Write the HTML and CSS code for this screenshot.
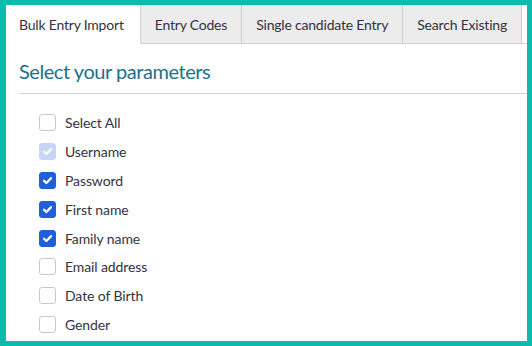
FILE: index.html
```html
<!DOCTYPE html>
<html lang="en">
<head>
<meta charset="utf-8">
<title>Bulk Entry Import</title>
<link rel="stylesheet" href="styles.css">
</head>
<body>
<div class="frame">
  <div class="tabs">
    <div class="tab active">Bulk Entry Import</div>
    <div class="tab">Entry Codes</div>
    <div class="tab">Single candidate Entry</div>
    <div class="tab">Search Existing</div>
  </div>
  <div class="panel">
    <h2 class="title">Select your parameters</h2>
    <ul class="params">
      <li class="param"><span class="box"></span><span class="label">Select All</span></li>
      <li class="param"><span class="box checked disabled"><svg viewBox="0 0 16 16"><path d="M4.3 8.2l2.5 2.5 4.9-5.2"/></svg></span><span class="label">Username</span></li>
      <li class="param"><span class="box checked"><svg viewBox="0 0 16 16"><path d="M4.3 8.2l2.5 2.5 4.9-5.2"/></svg></span><span class="label">Password</span></li>
      <li class="param"><span class="box checked"><svg viewBox="0 0 16 16"><path d="M4.3 8.2l2.5 2.5 4.9-5.2"/></svg></span><span class="label">First name</span></li>
      <li class="param"><span class="box checked"><svg viewBox="0 0 16 16"><path d="M4.3 8.2l2.5 2.5 4.9-5.2"/></svg></span><span class="label">Family name</span></li>
      <li class="param"><span class="box"></span><span class="label">Email address</span></li>
      <li class="param"><span class="box"></span><span class="label">Date of Birth</span></li>
      <li class="param"><span class="box"></span><span class="label">Gender</span></li>
    </ul>
  </div>
</div>
</body>
</html>
```
FILE: styles.css
```css
* { box-sizing: border-box; }
html, body { margin: 0; padding: 0; }
body {
  font-family: "Lato", "Noto Sans", sans-serif;
  color: #333340;
  background: #fff;
}
.frame {
  width: 532px;
  height: 346px;
  border: 5px solid #0cbaae;
  border-left-width: 6px;
  overflow: hidden;
  background: #fff;
}
.tabs {
  display: flex;
  height: 39px;
  border-bottom: 1px solid #cfcfcf;
}
.tab {
  height: 39px;
  margin-bottom: -1px;
  display: flex;
  align-items: center;
  padding: 0 14px;
  font-size: 14px;
  letter-spacing: -0.2px;
  color: #333340;
  background: #ececec;
  border-right: 1px solid #cfcfcf;
  border-bottom: 1px solid #cfcfcf;
  white-space: nowrap;
}
.tab.active {
  background: #fff;
  border-bottom-color: #fff;
  padding: 0 16px 0 13px;
}
.panel {
  padding: 0 0 0 13px;
}
.title {
  margin: 0;
  padding: 15px 0 9px 0;
  font-size: 20px;
  font-weight: 400;
  line-height: 25px;
  letter-spacing: -0.45px;
  color: #1d6f8a;
  border-bottom: 1px solid #d3d3d3;
}
.params {
  list-style: none;
  margin: 0;
  padding: 14px 0 0 20px;
}
.param {
  display: flex;
  align-items: center;
  height: 28.9px;
  font-size: 14px;
  letter-spacing: -0.1px;
}
.box {
  width: 17px;
  height: 17px;
  border: 1px solid #c9c9c9;
  border-radius: 3px;
  background: #fff;
  margin-right: 9px;
  display: flex;
  align-items: center;
  justify-content: center;
}
.box svg {
  width: 17px;
  height: 17px;
  fill: none;
  stroke: #fff;
  stroke-width: 2.4;
  stroke-linecap: round;
  stroke-linejoin: round;
}
.box.checked {
  background: #1f5fd7;
  border-color: #1f5fd7;
}
.box.checked.disabled {
  background: #c6d7f5;
  border-color: #c6d7f5;
}
.label { color: #333340; }
```
